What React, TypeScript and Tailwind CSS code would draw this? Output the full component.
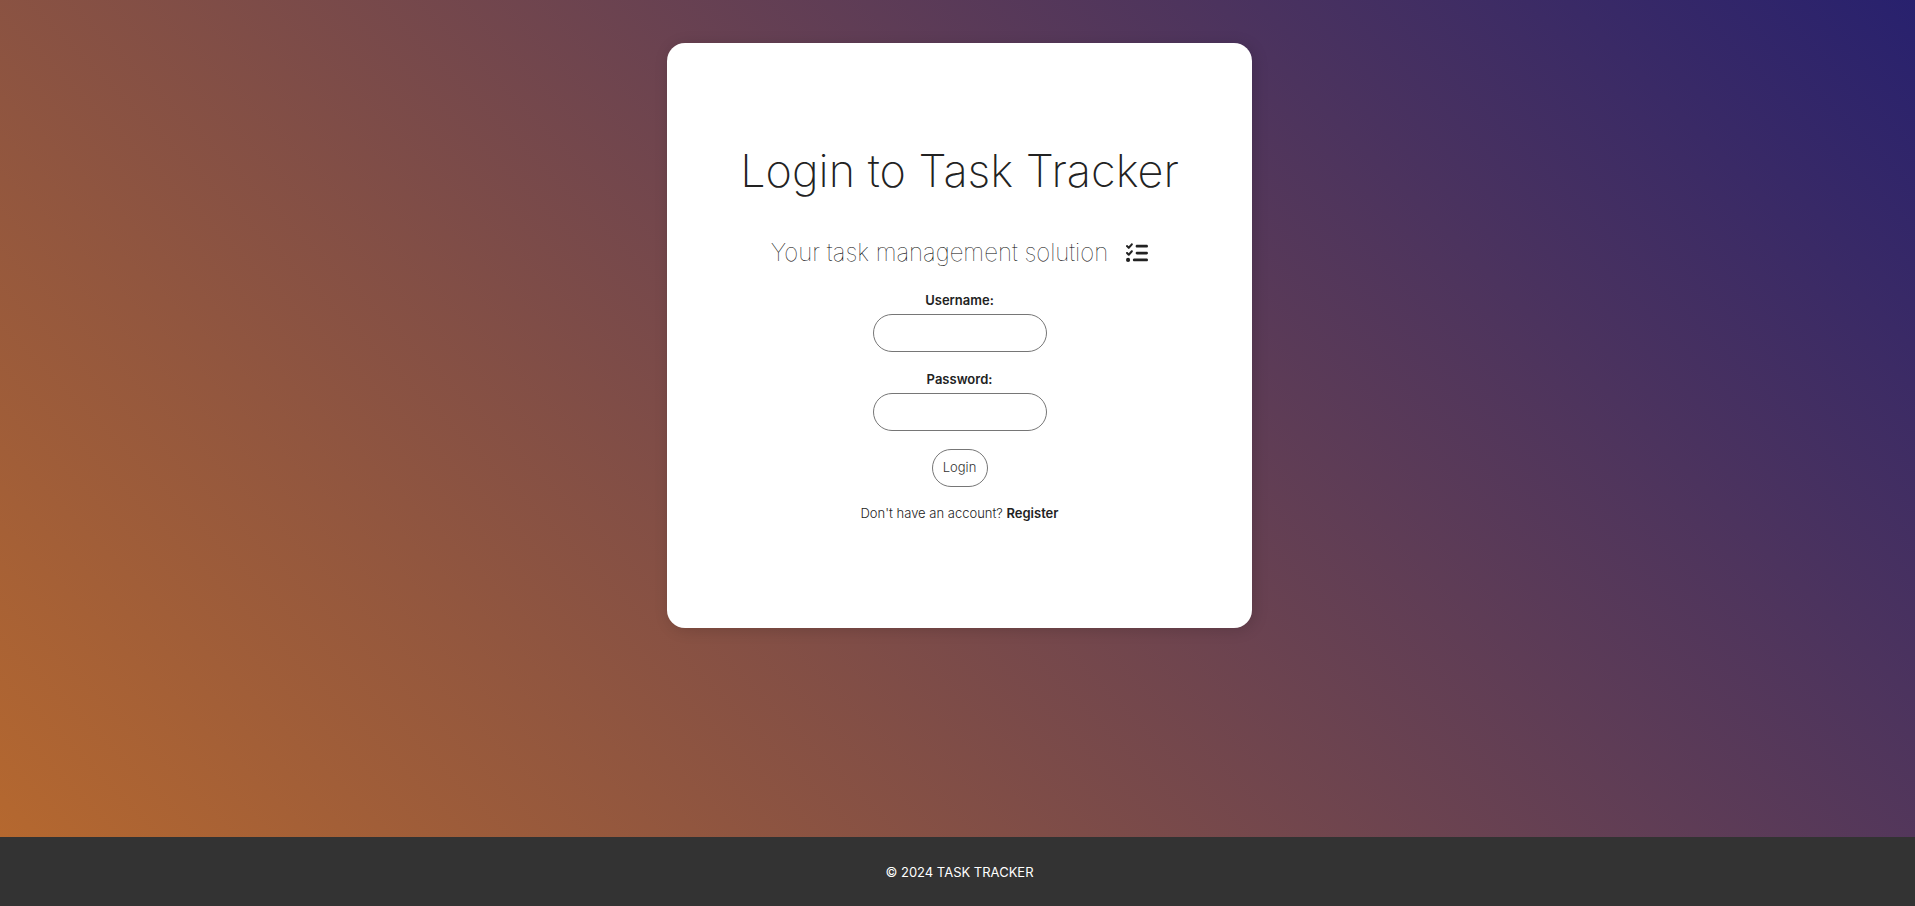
import { FaListCheck } from "react-icons/fa6";

const control = "h-[38px] rounded-[20px] border border-[#767676] bg-white text-[13px] text-[#333]";

function Field({ id, label, type }: { id: string; label: string; type: string }) {
  return (
    <div className="mb-[18px] flex flex-col items-center">
      <label htmlFor={id} className="mb-1 text-[13px] leading-[19px] font-semibold text-[#222]">
        {label}
      </label>
      <input id={id} name={id} type={type} className={`${control} w-[174px] px-2.5`} />
    </div>
  );
}

export default function App() {
  return (
    <div className="flex min-h-screen flex-col font-['Inter','Liberation_Sans',sans-serif] text-[13px]">
      <main className="flex flex-1 flex-col items-center bg-[linear-gradient(45deg,#b5682f,#28216e)] pt-[43px] pr-4 pb-10 pl-5">
        <section className="flex min-h-[585px] w-full max-w-[585px] flex-col items-center rounded-[18px] bg-white pt-[94px] pb-10 shadow-[2px_2px_15px_rgba(0,0,0,0.15)]">
          <h1 className="text-center text-[45px] leading-[68px] font-extralight text-[#222]">Login to Task Tracker</h1>
          <h2 className="mt-[31px] mb-[21px] flex items-center gap-[18px] text-[24px] leading-[34px] font-thin text-black">
            Your task management solution
            <FaListCheck className="size-[22px] text-[#222]" strokeWidth={0} aria-hidden="true" />
          </h2>
          <form className="flex flex-col items-center" onSubmit={(e) => e.preventDefault()}>
            <Field id="username" label="Username:" type="text" />
            <Field id="password" label="Password:" type="password" />
            <button type="submit" className={`${control} w-14 font-light`}>
              Login
            </button>
          </form>
          <p className="mt-4 leading-5 font-light text-[#222]">
            Don't have an account?{" "}
            <a href="#register" className="font-semibold text-[#222]">
              Register
            </a>
          </p>
        </section>
      </main>
      <footer className="bg-[#333] pt-[25px] pr-4 pb-[23px] pl-5 text-center leading-[21px] text-white">© 2024 TASK TRACKER</footer>
    </div>
  );
}
